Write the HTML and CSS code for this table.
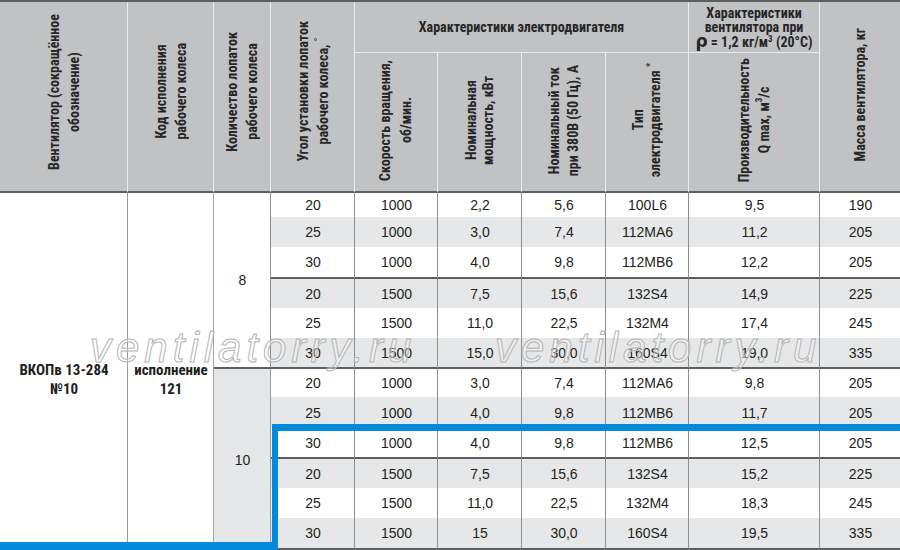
FILE: index.html
```html
<!DOCTYPE html>
<html lang="ru">
<head>
<meta charset="utf-8">
<title>ВКОПв 13-284 №10</title>
<link rel="stylesheet" href="styles.css">
</head>
<body>
<div class="sheet">
  <table class="spec">
    <colgroup>
      <col class="w128"><col class="w86"><col class="w57"><col class="w84">
      <col class="w83"><col class="w84"><col class="w84"><col class="w83">
      <col class="w131"><col class="w80">
    </colgroup>
    <thead>
      <tr class="ha">
        <th rowspan="2" class="tall lead"><span class="rot lh20">Вентилятор (сокращённое<br>обозначение)</span></th>
        <th rowspan="2" class="tall lead"><span class="rot lh20">Код исполнения<br>рабочего колеса</span></th>
        <th rowspan="2" class="tall lead"><span class="rot lh20">Количество лопаток<br>рабочего колеса</span></th>
        <th rowspan="2" class="tall lead"><span class="rot lh20">Угол установки лопаток<br>рабочего колеса, <sup>°</sup></span></th>
        <th colspan="4" class="group">Характеристики электродвигателя</th>
        <th class="group fan">Характеристики<br>вентилятора при<br><span class="rho">ρ</span> = 1,2 кг/м<sup>3</sup> (20°C)</th>
        <th rowspan="2" class="tall last"><span class="rot">Масса вентилятора, кг</span></th>
      </tr>
      <tr class="hb">
        <th><span class="rot lh21">Скорость вращения,<br>об/мин.</span></th>
        <th><span class="rot lh17">Номинальная<br>мощность, кВт</span></th>
        <th><span class="rot lh19">Номинальный ток<br>при 380В (50 Гц), А</span></th>
        <th><span class="rot lh17">Тип<br>электродвигателя <sup>*</sup></span></th>
        <th><span class="rot lh20">Производительность<br>Q max, м<sup>3</sup>/с</span></th>
      </tr>
    </thead>
    <tbody>
      <tr class="r24">
        <td rowspan="12" class="name">ВКОПв 13-284<br>№10</td>
        <td rowspan="12" class="name code">исполнение<br>121</td>
        <td rowspan="6" class="blades sep">8</td>
        <td>20</td><td>1000</td><td>2,2</td><td>5,6</td><td>100L6</td><td>9,5</td><td>190</td>
      </tr>
      <tr class="r30"><td>25</td><td>1000</td><td>3,0</td><td>7,4</td><td>112MA6</td><td>11,2</td><td>205</td></tr>
      <tr class="r32 sep"><td>30</td><td>1000</td><td>4,0</td><td>9,8</td><td>112MB6</td><td>12,2</td><td>205</td></tr>
      <tr class="r29"><td>20</td><td>1500</td><td>7,5</td><td>15,6</td><td>132S4</td><td>14,9</td><td>225</td></tr>
      <tr class="r30"><td>25</td><td>1500</td><td>11,0</td><td>22,5</td><td>132M4</td><td>17,4</td><td>245</td></tr>
      <tr class="r31 sep"><td>30</td><td>1500</td><td>15,0</td><td>30,0</td><td>160S4</td><td>19,0</td><td>335</td></tr>
      <tr class="r28">
        <td rowspan="6" class="blades shade">10</td>
        <td>20</td><td>1000</td><td>3,0</td><td>7,4</td><td>112MA6</td><td>9,8</td><td>205</td>
      </tr>
      <tr class="r31"><td>25</td><td>1000</td><td>4,0</td><td>9,8</td><td>112MB6</td><td>11,7</td><td>205</td></tr>
      <tr class="r31 sep"><td>30</td><td>1000</td><td>4,0</td><td>9,8</td><td>112MB6</td><td>12,5</td><td>205</td></tr>
      <tr class="r29"><td>20</td><td>1500</td><td>7,5</td><td>15,6</td><td>132S4</td><td>15,2</td><td>225</td></tr>
      <tr class="r30"><td>25</td><td>1500</td><td>11,0</td><td>22,5</td><td>132M4</td><td>18,3</td><td>245</td></tr>
      <tr class="r32 sep"><td>30</td><td>1500</td><td>15</td><td>30,0</td><td>160S4</td><td>19,5</td><td>335</td></tr>
    </tbody>
  </table>

  <div class="wm wm-a">ventilatorry.ru</div>
  <div class="wm wm-b">ventilatorry.ru</div>

  <div class="hl"></div>
  <div class="hl-base"></div>
</div>
</body>
</html>
```

FILE: styles.css
```css
html, body {
  margin: 0;
  padding: 0;
  overflow: hidden;
  background: #ffffff;
}

.sheet {
  position: relative;
  width: 900px;
  height: 550px;
  overflow: hidden;
}

.spec {
  width: 900px;
  table-layout: fixed;
  border-collapse: separate;
  border-spacing: 0;
  border-top: 2px solid #5d5e60;
  font-family: "Liberation Sans", Arial, sans-serif;
  font-size: 14px;
  color: #231f20;
}

.w128 { width: 128px; }
.w86 { width: 86px; }
.w57 { width: 57px; }
.w84 { width: 84px; }
.w83 { width: 83px; }
.w131 { width: 131px; }
.w80 { width: 80px; }

/* ---------- header ---------- */
.spec th {
  background: #c1c2c4;
  border-right: 1px solid #ebebeb;
  padding: 0;
  font-family: "Liberation Sans Narrow", "Roboto Condensed", "DejaVu Sans Condensed", "Liberation Sans", sans-serif;
  font-weight: bold;
  font-size: 14px;
  color: #262626;
  text-align: center;
  vertical-align: middle;
}

.spec th.last { border-right: none; }
.spec th.tall,
.hb th { border-bottom: 2px solid #5d5e60; }
.spec th.group { border-bottom: 1px solid #ebebeb; }
.spec th.lead { padding-bottom: 7px; }

.ha { height: 51px; }
.hb { height: 140px; }

.fan {
  line-height: 14px;
  padding-top: 1px;
}

.rho {
  font-family: "DejaVu Sans", sans-serif;
  font-size: 17px;
  font-weight: bold;
  line-height: 14px;
}

.spec sup {
  font-size: 9px;
  line-height: 0;
  vertical-align: 5px;
}

.rot {
  display: inline-block;
  writing-mode: vertical-rl;
  transform: rotate(180deg);
  white-space: nowrap;
  line-height: 19px;
}

.lh17 { line-height: 17px; }
.lh19 { line-height: 19px; }
.lh20 { line-height: 20px; }
.lh21 { line-height: 21px; }

/* ---------- body ---------- */
.spec td {
  padding: 0 0 0 1px;
  text-align: center;
  vertical-align: middle;
  border-right: 1px solid #8e8e8e;
  line-height: 16px;
}

.spec td:last-child { border-right: none; }

.spec td.name {
  font-family: "Liberation Sans Narrow", "Roboto Condensed", "DejaVu Sans Condensed", "Liberation Sans", sans-serif;
  font-weight: bold;
  font-size: 15px;
  line-height: 19px;
  padding-top: 16px;
  background: #ffffff;
}

.spec td.name.code { border-right: 1px solid #a8a8a8; }
.spec tbody tr:first-child td.name:first-child { border-right: 1px solid #9a9a9a; }

.spec td.blades { background: #ffffff; }
.spec td.blades.shade { background: #e6e7e8; border-right: 1px solid #9a9a9a; }

.spec tbody tr:nth-child(even) td { background: #e6e7e8; }

.spec tr.sep td,
.spec td.blades.sep { border-bottom: 2px solid #5d5e60; }

.r24 { height: 24px; }
.r28 { height: 28px; }
.r29 { height: 29px; }
.r30 { height: 30px; }
.r31 { height: 31px; }
.r32 { height: 32px; }

/* ---------- watermark ---------- */
.wm {
  position: absolute;
  top: 327px;
  font-family: "Liberation Sans", Arial, sans-serif;
  font-style: italic;
  font-size: 42px;
  line-height: 42px;
  letter-spacing: 5px;
  white-space: nowrap;
  color: rgba(255, 255, 255, 0.35);
  -webkit-text-stroke: 1px #b4b4b4;
  pointer-events: none;
}

.wm-a { left: 90px; }
.wm-b { left: 495px; }

/* ---------- highlight frame ---------- */
.hl {
  position: absolute;
  left: 272px;
  top: 424px;
  right: 0;
  height: 140px;
  border-top: 7px solid #0589dc;
  border-left: 6px solid #0589dc;
}

.hl-base {
  position: absolute;
  left: 0;
  top: 542px;
  width: 278px;
  height: 10px;
  background: #0589dc;
}
```
